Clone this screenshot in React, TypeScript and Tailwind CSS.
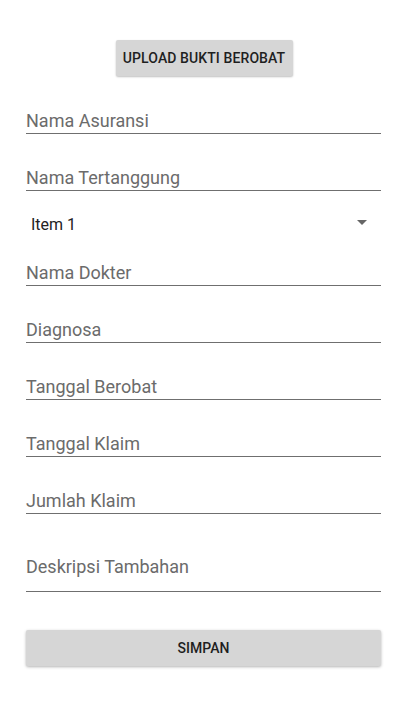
import React from "react";

const Field: React.FC<{ label: string; className?: string }> = ({ label, className }) => {
  return (
    <div className={`border-b border-[#6f6f6f] text-[18px] leading-[24px] text-[#6b6b6b] ${className ?? ""}`}>
      {label}
    </div>
  );
};

const App: React.FC = () => {
  return (
    <div className="w-[409px] h-[727px] bg-white font-['Roboto',sans-serif] overflow-hidden">
      <div className="flex flex-col px-[26px] pr-[28px]">
        {/* upload button */}
        <div className="flex justify-center pt-[40px]">
          <button className="h-[36px] w-[177px] ml-[1px] bg-[#d6d6d6] rounded-[2px] shadow-[0_1px_2px_rgba(0,0,0,0.25)] text-[14px] font-medium text-[#1f1f1f] tracking-[0.1px]">
            UPLOAD BUKTI BEROBAT
          </button>
        </div>

        <Field label="Nama Asuransi" className="mt-[33px]" />
        <Field label="Nama Tertanggung" className="mt-[32px]" />

        {/* spinner */}
        <div className="mt-[22px] h-[24px] flex items-center justify-between pl-[5px] pr-[14px]">
          <span className="text-[16px] leading-[24px] text-[#222]">Item 1</span>
          <svg width="10" height="5" viewBox="0 0 10 5" className="mb-[5px]">
            <path d="M0 0 L10 0 L5 5 Z" fill="#666" />
          </svg>
        </div>

        <Field label="Nama Dokter" className="mt-[24px]" />
        <Field label="Diagnosa" className="mt-[32px]" />
        <Field label="Tanggal Berobat" className="mt-[32px]" />
        <Field label="Tanggal Klaim" className="mt-[32px]" />
        <Field label="Jumlah Klaim" className="mt-[32px]" />
        <Field label="Deskripsi Tambahan" className="mt-[41px] pb-[12px]" />

        {/* save button */}
        <button className="mt-[38px] h-[36px] w-full bg-[#d6d6d6] rounded-[2px] shadow-[0_1px_3px_rgba(0,0,0,0.3)] text-[14px] font-medium text-[#1f1f1f]">
          SIMPAN
        </button>
      </div>
    </div>
  );
};

export default App;
